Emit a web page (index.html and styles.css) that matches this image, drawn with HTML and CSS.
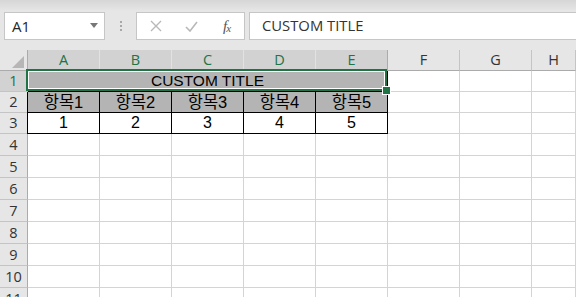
FILE: index.html
```html
<!DOCTYPE html>
<html>

	<head>
		<meta charset="UTF-8">
		<title>Sheet1</title>
		<link rel="stylesheet" href="styles.css">
	</head>

	<body>
		<div class="bar">
			<div class="namebox">
				<span>A1</span>
				<svg class="drop" width="8" height="5" viewBox="0 0 8 5"><path d="M0 0h8L4 5z" fill="#777"/></svg>
			</div>
			<div class="dots"><i></i><i></i><i></i></div>
			<div class="fxbox">
				<svg class="btn" width="12" height="12" viewBox="0 0 12 12"><path d="M1 1l10 10M11 1L1 11" stroke="#b8b8b8" stroke-width="1.4" fill="none"/></svg>
				<svg class="btn" width="13" height="11" viewBox="0 0 13 11"><path d="M1 6l4 4 7-9" stroke="#b8b8b8" stroke-width="1.6" fill="none"/></svg>
				<span class="fx">f<sub>x</sub></span>
			</div>
			<div class="formula">CUSTOM TITLE</div>
		</div>

		<div class="sheet">
			<!-- 列头 -->
			<div class="corner"><svg width="12" height="12" viewBox="0 0 12 12"><path d="M12 0v12H0z" fill="#b6b6b6"/></svg></div>
			<div class="colhead sel">A</div>
			<div class="colhead sel">B</div>
			<div class="colhead sel">C</div>
			<div class="colhead sel">D</div>
			<div class="colhead sel last">E</div>
			<div class="colhead">F</div>
			<div class="colhead">G</div>
			<div class="colhead">H</div>

			<!-- 第1行 合并单元格 -->
			<div class="rowhead sel">1</div>
			<div class="cell merged fill">CUSTOM TITLE</div>
			<div class="cell"></div>
			<div class="cell"></div>
			<div class="cell"></div>

			<!-- 第2行 -->
			<div class="rowhead">2</div>
			<div class="cell fill box kr first">항목1</div>
			<div class="cell fill box kr">항목2</div>
			<div class="cell fill box kr">항목3</div>
			<div class="cell fill box kr">항목4</div>
			<div class="cell fill box kr">항목5</div>
			<div class="cell"></div>
			<div class="cell"></div>
			<div class="cell"></div>

			<!-- 第3行 -->
			<div class="rowhead">3</div>
			<div class="cell box num first">1</div>
			<div class="cell box num">2</div>
			<div class="cell box num">3</div>
			<div class="cell box num">4</div>
			<div class="cell box num">5</div>
			<div class="cell"></div>
			<div class="cell"></div>
			<div class="cell"></div>
		</div>

		<div class="sheet rest" id="rest"></div>

		<script type="text/javascript">
			//空白行 4 - 11
			var rest = document.getElementById('rest');
			var html = '';
			for (var r = 4; r <= 11; r++) {
				html += '<div class="rowhead">' + r + '</div>';
				for (var c = 0; c < 8; c++) {
					html += '<div class="cell"></div>';
				}
			}
			rest.innerHTML = html;
		</script>
	</body>

</html>
```

FILE: styles.css
```css
* {
	margin: 0;
	padding: 0;
	box-sizing: border-box;
}

body {
	width: 576px;
	height: 297px;
	overflow: hidden;
	background: #e6e6e6;
	font-family: "Open Sans", "Noto Sans", sans-serif;
}

/* 公式栏 */
.bar {
	height: 50px;
	display: flex;
	align-items: flex-start;
	padding: 12px 0 0 4px;
	background: linear-gradient(#d6d6d6, #e6e6e6 11px);
}

.namebox {
	width: 101px;
	height: 28px;
	background: #fff;
	border: 1px solid #c6c6c6;
	display: flex;
	align-items: center;
	justify-content: space-between;
	padding: 0 6px 0 7px;
	font-size: 15px;
	color: #262626;
}

.namebox .drop {
	margin-top: -2px;
}

.dots {
	width: 31px;
	height: 28px;
	display: flex;
	flex-direction: column;
	align-items: center;
	justify-content: center;
	gap: 2px;
}

.dots i {
	width: 2px;
	height: 2px;
	background: #a8a8a8;
}

.fxbox {
	width: 109px;
	height: 28px;
	background: #fff;
	border: 1px solid #c6c6c6;
	display: flex;
	align-items: center;
	padding-left: 13px;
}

.fxbox .btn {
	margin-right: 23px;
}

.fxbox .btn + .btn {
	margin-right: 25px;
}

.fx {
	font-family: "Liberation Serif", serif;
	font-style: italic;
	font-size: 15px;
	color: #555;
	letter-spacing: -1px;
}

.fx sub {
	font-size: 11px;
	vertical-align: -1px;
}

.formula {
	flex: 1;
	height: 28px;
	margin-left: 4px;
	background: #fff;
	border: 1px solid #c6c6c6;
	border-right: 0;
	padding-left: 12px;
	line-height: 25px;
	font-size: 14.8px;
	color: #333;
}

/* 表格 */
.sheet {
	display: grid;
	grid-template-columns: 28px repeat(7, 72px) 44px;
	grid-template-rows: 21px repeat(3, 21px);
	background: #fff;
}

.sheet.rest {
	grid-template-rows: repeat(8, 22px);
}

.corner {
	background: #e6e6e6;
	border-right: 1px solid #ababab;
	border-bottom: 1px solid #ababab;
	display: flex;
	align-items: flex-end;
	justify-content: flex-end;
	padding: 0 3px 2px 0;
}

.colhead {
	background: #e6e6e6;
	border-right: 1px solid #c4c4c4;
	border-bottom: 1px solid #ababab;
	text-align: center;
	font-size: 14.5px;
	line-height: 20px;
	color: #333;
}

.colhead.sel {
	background: #d2d2d2;
	color: #217346;
	border-right-color: #e2e2e2;
}

.colhead.last {
	border-right-color: #ababab;
}

.rowhead {
	background: #e6e6e6;
	border-right: 1px solid #ababab;
	border-bottom: 1px solid #c4c4c4;
	text-align: center;
	font-size: 14.5px;
	line-height: 20px;
	color: #333;
}

.rest .rowhead {
	line-height: 22px;
}

.rowhead.sel {
	background: #d2d2d2;
	color: #217346;
}

.cell {
	border-right: 1px solid #d4d4d4;
	border-bottom: 1px solid #d4d4d4;
	font-family: "Liberation Sans", "Noto Sans CJK KR", sans-serif;
	font-size: 15.5px;
	line-height: 20px;
	text-align: center;
	color: #000;
}

.cell.kr {
	font-size: 16.5px;
}

.cell.num {
	font-size: 16px;
}

.cell.fill {
	background: #b4b4b4;
}

.cell.box {
	border-color: #000;
}

.cell.first {
	box-shadow: -1px 0 0 #000;
}

/* 合并 A1:E1 + 选中框 */
.cell.merged {
	grid-column: span 5;
	position: relative;
	border-bottom-color: #000;
	border-right-color: #000;
}

.cell.merged::after {
	content: "";
	position: absolute;
	left: -2px;
	top: -2px;
	right: 0;
	bottom: 0;
	border: 2px solid #217346;
	box-shadow: inset 0 0 0 1px #fff;
}

.cell.merged::before {
	content: "";
	position: absolute;
	right: -4px;
	bottom: -4px;
	width: 7px;
	height: 7px;
	background: #217346;
	border: 1px solid #fff;
	z-index: 1;
}
```
